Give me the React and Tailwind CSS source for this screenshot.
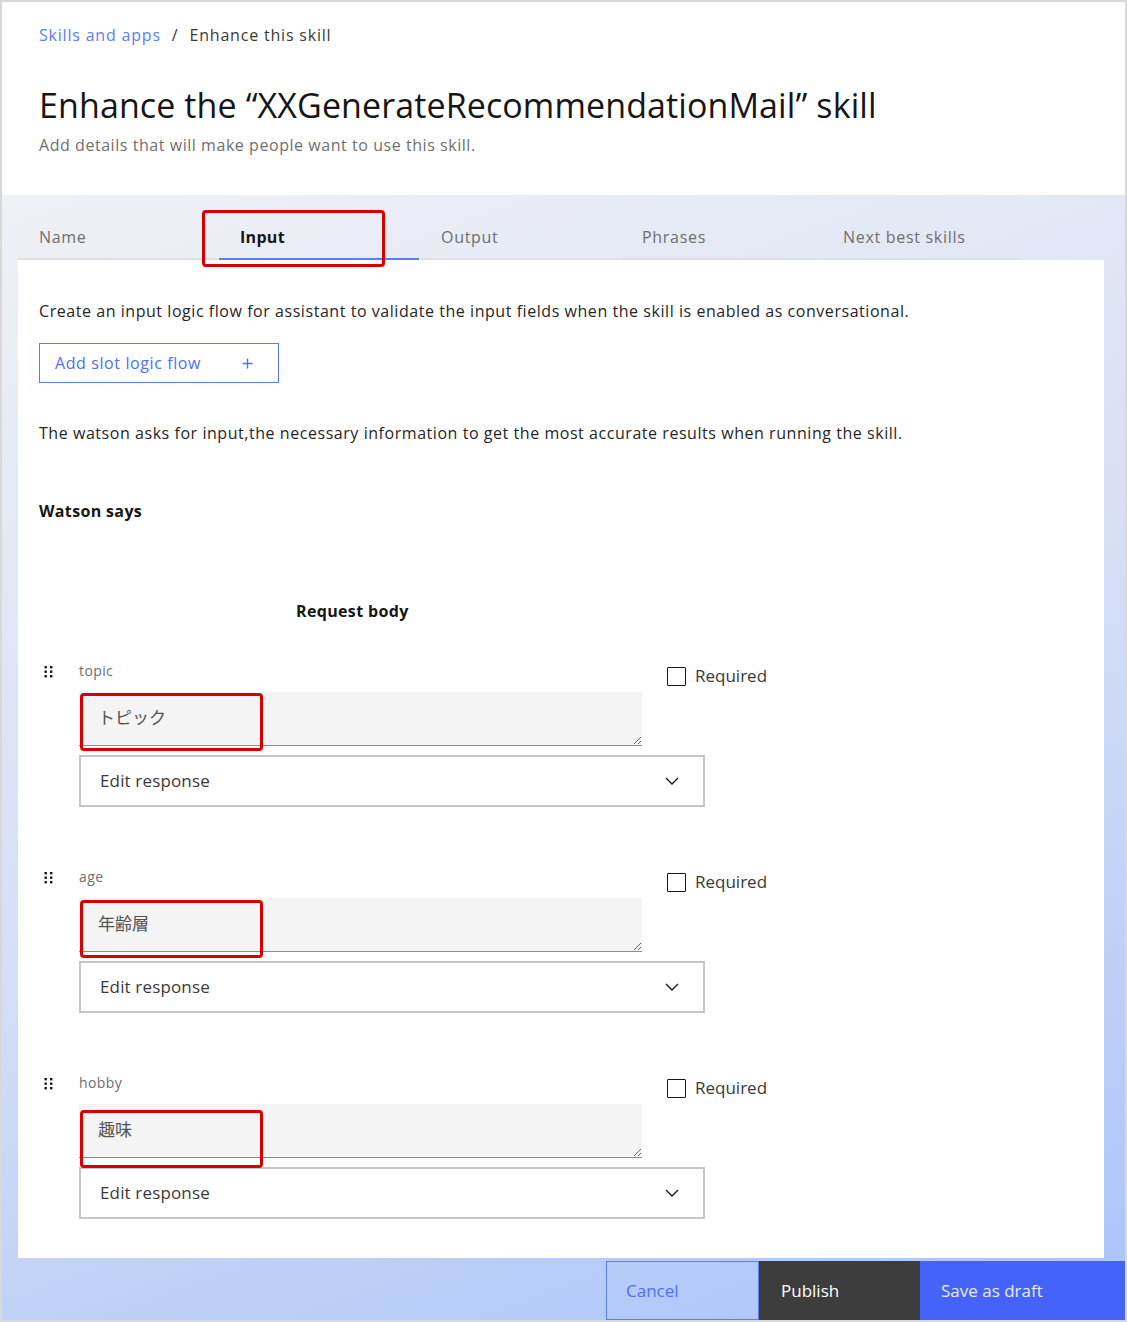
import React from 'react';

const FONT = { fontFamily: '"Open Sans", "Noto Sans CJK JP", sans-serif' };

const DragHandle = () => (
  <svg width="9" height="12" viewBox="0 0 9 12" className="text-[#161616]">
    <rect x="0.5" y="0" width="2.4" height="2.4" fill="currentColor" />
    <rect x="6" y="0" width="2.4" height="2.4" fill="currentColor" />
    <rect x="0.5" y="4.5" width="2.4" height="2.4" fill="currentColor" />
    <rect x="6" y="4.5" width="2.4" height="2.4" fill="currentColor" />
    <rect x="0.5" y="9" width="2.4" height="2.4" fill="currentColor" />
    <rect x="6" y="9" width="2.4" height="2.4" fill="currentColor" />
  </svg>
);

const Chevron = () => (
  <svg width="14" height="8" viewBox="0 0 14 8" fill="none">
    <path d="M1 1 L7 7 L13 1" stroke="#161616" strokeWidth="1.3" />
  </svg>
);

const RedMark = ({ className }) => (
  <div className={`absolute border-[3px] border-[#d60000] rounded-[4px] pointer-events-none ${className}`} />
);

const FieldRow = ({ name, value, markTop, first }) => (
  <div className={`flex ${first ? 'mt-[38px]' : 'mt-[60px]'}`}>
    <div className="w-[40px] pl-[5px] pt-[5px]">
      <DragHandle />
    </div>
    <div className="flex flex-col">
      <div className="flex items-start">
        <div className="w-[563px] flex flex-col">
          <div className="h-[20px] leading-[20px] text-[14px] tracking-[0.4px] text-[#6f6f6f]">{name}</div>
          <div className="relative mt-[11px]">
            <textarea
              readOnly
              defaultValue={value}
              className="block w-[563px] h-[54px] bg-[#f4f4f4] border-0 border-b border-[#8d8d8d] px-[19px] pt-[14px] text-[17px] leading-[24px] text-[#525252] resize-y outline-none"
            />
            <RedMark className={`left-[1px] w-[183px] h-[58px] ${markTop}`} />
          </div>
        </div>
        <label className="ml-[25px] mt-[5px] flex items-center gap-[9px]">
          <span className="w-[19px] h-[19px] border border-[#161616] rounded-[1px] bg-white" />
          <span className="text-[17px] leading-[20px] text-[#393939]">Required</span>
        </label>
      </div>
      <div className="mt-[9px] w-[626px] h-[52px] border-2 border-[#c6c6c6] bg-white flex items-center justify-between pl-[19px] pr-[24px]">
        <span className="text-[17px] tracking-[0.15px] text-[#393939]">Edit response</span>
        <Chevron />
      </div>
    </div>
  </div>
);

const tabs = ['Name', 'Input', 'Output', 'Phrases', 'Next best skills'];

export default function App() {
  return (
    <div className="w-[1127px] h-[1322px] border-2 border-[#d8d8d8] flex flex-col bg-white" style={FONT}>
      <header className="h-[193px] bg-white pl-[37px] pt-[21px]">
        <div className="text-[16px] leading-[24px] tracking-[0.8px] flex items-center">
          <span className="text-[#5b7ef7]">Skills and apps</span>
          <span className="text-[#393939] mx-[11px]">/</span>
          <span className="text-[#393939]">Enhance this skill</span>
        </div>
        <h1 className="mt-[36px] text-[34px] leading-[44px] tracking-[0.1px] text-[#161616] font-normal">
          Enhance the “XXGenerateRecommendationMail” skill
        </h1>
        <p className="mt-[6px] text-[16px] leading-[24px] tracking-[0.55px] text-[#6f6f6f]">
          Add details that will make people want to use this skill.
        </p>
      </header>

      <div className="flex-1 flex flex-col bg-linear-[160deg] from-[#f0f1f5] via-[#d5dff6] to-[#a9c3fa]">
        <nav className="relative h-[65px] pl-[16px] flex items-end gap-[1px]">
          {tabs.map((t) => (
            <div
              key={t}
              className={`w-[200px] h-[44px] pl-[21px] flex items-center text-[16px] border-b-2 ${
                t === 'Input'
                  ? 'border-[#5b7ef7] font-bold text-[#161616] tracking-[0.3px]'
                  : 'border-[#e0e0e0] text-[#6f6f6f] tracking-[0.7px]'
              }`}
            >
              {t}
            </div>
          ))}
          <RedMark className="left-[200px] top-[15px] w-[183px] h-[57px] z-10" />
        </nav>

        <main className="ml-[16px] mr-[21px] h-[998px] bg-white px-[21px] pt-[39px]">
          <p className="text-[16px] leading-[24px] tracking-[0.55px] text-[#262626]">
            Create an input logic flow for assistant to validate the input fields when the skill is enabled as conversational.
          </p>
          <button className="mt-[20px] w-[240px] h-[40px] border border-[#5b7ef7] flex items-center justify-between pl-[15px] pr-[25px] text-[16px] tracking-[0.6px] text-[#4f6ff8]">
            <span>Add slot logic flow</span>
            <svg width="11" height="11" viewBox="0 0 11 11">
              <path d="M5.5 0.5 V10.5 M0.5 5.5 H10.5" stroke="#4f6ff8" strokeWidth="1.4" />
            </svg>
          </button>
          <p className="mt-[38px] text-[16px] leading-[24px] tracking-[0.55px] text-[#262626]">
            The watson asks for input,the necessary information to get the most accurate results when running the skill.
          </p>
          <h3 className="mt-[54px] text-[16px] leading-[24px] tracking-[0.35px] font-bold text-[#161616]">Watson says</h3>
          <h3 className="mt-[76px] pl-[257px] text-[16px] leading-[24px] tracking-[0.35px] font-bold text-[#161616]">Request body</h3>

          <FieldRow first name="topic" value="トピック" markTop="top-[1px]" />
          <FieldRow name="age" value="年齢層" markTop="top-[2px]" />
          <FieldRow name="hobby" value="趣味" markTop="top-[6px]" />
        </main>

        <footer className="mt-[3px] h-[59px] flex justify-end">
          <button className="w-[153px] h-full border border-[#5b7ef7] text-left pl-[19px] text-[17px] text-[#4f6ff8]">
            Cancel
          </button>
          <button className="w-[161px] h-full bg-[#3d3d3d] text-left pl-[22px] text-[17px] text-white">
            Publish
          </button>
          <button className="w-[205px] h-full bg-[#4563fb] text-left pl-[21px] text-[17px] text-[#e8edff]">
            Save as draft
          </button>
        </footer>
      </div>
    </div>
  );
}
